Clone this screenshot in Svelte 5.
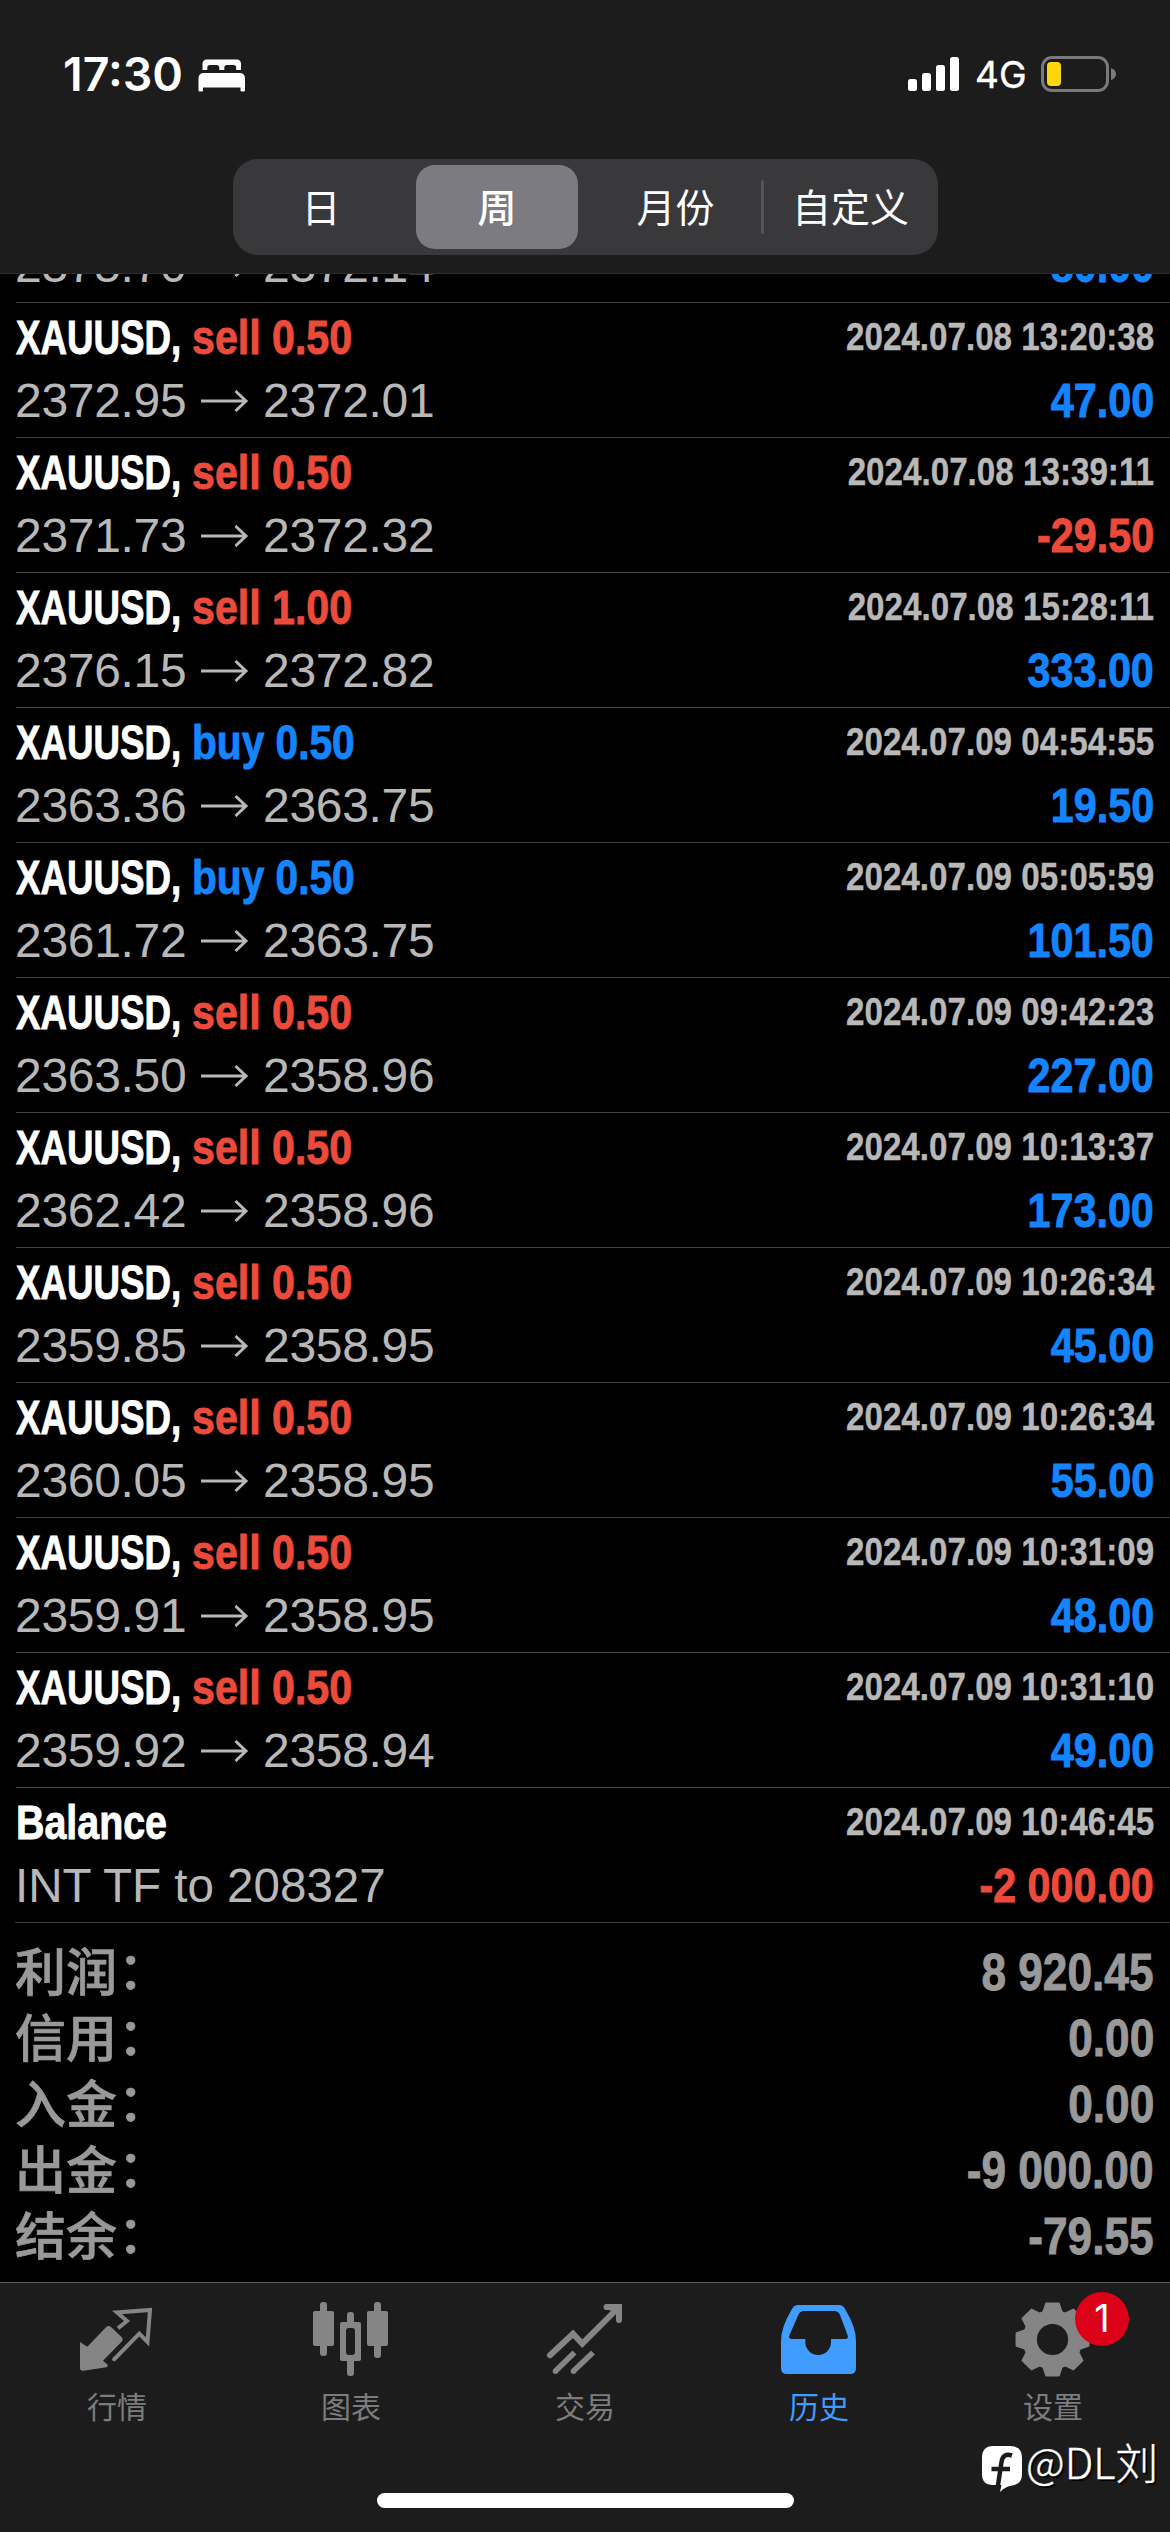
<script>
  const deals = [
    { side: 'sell', volume: '0.50', time: '2024.07.08 13:20:38', open: '2372.95', close: '2372.01', result: '47.00' },
    { side: 'sell', volume: '0.50', time: '2024.07.08 13:39:11', open: '2371.73', close: '2372.32', result: '-29.50' },
    { side: 'sell', volume: '1.00', time: '2024.07.08 15:28:11', open: '2376.15', close: '2372.82', result: '333.00' },
    { side: 'buy', volume: '0.50', time: '2024.07.09 04:54:55', open: '2363.36', close: '2363.75', result: '19.50' },
    { side: 'buy', volume: '0.50', time: '2024.07.09 05:05:59', open: '2361.72', close: '2363.75', result: '101.50' },
    { side: 'sell', volume: '0.50', time: '2024.07.09 09:42:23', open: '2363.50', close: '2358.96', result: '227.00' },
    { side: 'sell', volume: '0.50', time: '2024.07.09 10:13:37', open: '2362.42', close: '2358.96', result: '173.00' },
    { side: 'sell', volume: '0.50', time: '2024.07.09 10:26:34', open: '2359.85', close: '2358.95', result: '45.00' },
    { side: 'sell', volume: '0.50', time: '2024.07.09 10:26:34', open: '2360.05', close: '2358.95', result: '55.00' },
    { side: 'sell', volume: '0.50', time: '2024.07.09 10:31:09', open: '2359.91', close: '2358.95', result: '48.00' },
    { side: 'sell', volume: '0.50', time: '2024.07.09 10:31:10', open: '2359.92', close: '2358.94', result: '49.00' }
  ];

  const totals = [
    ['利润', '8 920.45'],
    ['信用', '0.00'],
    ['入金', '0.00'],
    ['出金', '-9 000.00'],
    ['结余', '-79.55']
  ];

  const periods = ['日', '周', '月份', '自定义'];
  const activePeriod = 1;

  const tabs = [
    { id: 'quotes', label: '行情' },
    { id: 'charts', label: '图表' },
    { id: 'trade', label: '交易' },
    { id: 'history', label: '历史' },
    { id: 'settings', label: '设置', badge: 1 }
  ];

  // Outline of an eight-tooth gear around (cx, cy)
  function gear(cx, cy, tip, root) {
    const at = (deg, r) => {
      const a = (deg * Math.PI) / 180;
      return (cx + r * Math.sin(a)).toFixed(2) + ' ' + (cy - r * Math.cos(a)).toFixed(2);
    };
    let d = '';
    for (let i = 0; i < 8; i++) {
      const c = i * 45;
      d += (i ? 'L' : 'M') + at(c - 18, root) + 'L' + at(c - 10, tip) + 'L' + at(c + 10, tip) + 'L' + at(c + 18, root);
      d += 'Q' + at(c + 22.5, root - 1) + ' ' + at(c + 27, root);
    }
    return d + 'Z';
  }
  const gearPath = gear(38.5, 40.5, 36.5, 29.2);
</script>

{#snippet prices(open, close)}
  <span class="prices">
    <span class="open">{open}</span>
    <svg class="arrow" width="48" height="26" viewBox="0 0 48 26"><path d="M0 13H45M34.500 3L45 13L34.500 23" /></svg>
    <span>{close}</span>
  </span>
{/snippet}

<div class="screen">
  <header>
    <div class="status">
      <span class="clock">17:30</span>
      <svg class="bed" width="48" height="33" viewBox="0 0 48 33">
        <path d="M4.500 11V5Q4.500 0.500 9 0.500H38.500Q43 0.500 43 5V11H38.200V8.500Q38.200 6 35.700 6H29Q26.300 6 26.300 8.500V11H21.300V8.500Q21.300 6 18.600 6H12Q9.300 6 9.300 8.500V11Z" />
        <path d="M0.500 32V19.500Q0.500 14 6 14H41.500Q47 14 47 19.500V32Q44.700 33.200 42.500 32V28.500H5V32Q2.800 33.200 0.500 32Z" />
      </svg>
      <span class="spacer"></span>
      <svg class="signal" width="52" height="36" viewBox="0 0 52 36">
        <rect x="0" y="23" width="9" height="12" rx="2.500" /><rect x="14" y="17" width="9" height="18" rx="2.500" />
        <rect x="28" y="9" width="9" height="26" rx="2.500" /><rect x="42" y="1" width="9" height="34" rx="2.500" />
      </svg>
      <span class="network">4G</span>
      <svg class="battery" width="76" height="36" viewBox="0 0 76 36">
        <rect x="1.500" y="1.500" width="65" height="33" rx="9.500" fill="none" stroke="#7a7a7c" stroke-width="3" />
        <rect x="6" y="6" width="14" height="24" rx="4" fill="#ffd60a" />
        <path d="M70 12Q75 14 75 18Q75 22 70 24Z" fill="#7a7a7c" />
      </svg>
    </div>
    <div class="segments">
      {#each periods as period, i}
        <div class="segment" class:active={i === activePeriod} class:divided={i === 3}><span>{period}</span></div>
      {/each}
    </div>
  </header>

  <main>
    <div class="cut">
      <div class="row">
        <div class="line second">{@render prices('2375.70', '2372.14')}<span class="result">80.00</span></div>
      </div>
    </div>
    {#each deals as deal}
      <div class="row">
        <div class="line first">
          <span class="symbol">XAUUSD,</span>
          <span class="side {deal.side}">{deal.side} {deal.volume}</span>
          <span class="time">{deal.time}</span>
        </div>
        <div class="line second">
          {@render prices(deal.open, deal.close)}
          <span class="result" class:loss={deal.result.startsWith('-')}>{deal.result}</span>
        </div>
      </div>
    {/each}
    <div class="row">
      <div class="line first"><span class="balance">Balance</span><span class="time">2024.07.09 10:46:45</span></div>
      <div class="line second"><span class="note">INT TF to 208327</span><span class="result loss">-2 000.00</span></div>
    </div>
    <div class="totals">
      {#each totals as [label, value]}
        <div class="total"><span class="label">{label}</span><span class="colon">：</span><span class="amount">{value}</span></div>
      {/each}
    </div>
  </main>

  <nav>
    <div class="tabs">
      {#each tabs as tab}
        <div class="tab" class:current={tab.id === 'history'}>
          <svg class="icon" width="78" height="78" viewBox="0 0 78 78">
            {#if tab.id === 'quotes'}
              <path class="fill" d="M2 43L9.300 47.700L28 28.300Q30.500 26 33 28L44 38.500Q45.500 40.500 44 42.300L25 61.700L29.700 65.700Q30.500 67.500 28.500 68.200L5.300 71.700Q2 72 2 69Z" />
              <path class="line" stroke-width="4" d="M40 29.300L49 22L39 13.500L72 11L69.500 43L61.300 34.500L36.300 60.200L34.500 59.500" />
            {:else if tab.id === 'charts'}
              <g class="fill">
                <rect x="1" y="12" width="21" height="35" rx="2" /><rect x="8" y="3" width="7" height="54" rx="3" />
                <rect x="55" y="12" width="21" height="35" rx="2" /><rect x="62" y="3" width="7" height="56" rx="3" />
                <rect x="35" y="13" width="7" height="14" rx="3" /><rect x="35" y="58" width="7" height="19" rx="3" />
                <path fill-rule="evenodd" d="M30 23H47Q49 23 49 25V60Q49 62 47 62H30Q28 62 28 60V25Q28 23 30 23ZM37 29Q34 29 34 32V53Q34 56 37 56H40Q43 56 43 53V32Q43 29 40 29Z" />
              </g>
            {:else if tab.id === 'trade'}
              <path class="line" stroke-width="6" stroke-linecap="round" d="M4 56.300L27 34.700L36.300 44.700L71 10M60.500 8H73V21" />
              <path class="fill" d="M60 5H76V22L71 15L63 11Z" />
              <path class="line" stroke-width="5.500" d="M9.300 72.300L28.500 53.500M27.300 72.300L47 53.500" />
              <circle class="fill" cx="9.500" cy="72.200" r="2.800" /><circle class="fill" cx="27.500" cy="72.200" r="2.800" />
            {:else if tab.id === 'history'}
              <path class="fill" fill-rule="evenodd" d="M18 6H59Q63 6 65 10Q76 28 76 42V69Q76 75 70 75H7Q1 75 1 69V42Q1 28 12 10Q14 6 18 6ZM24 12Q20 12 18.500 15.500L9.500 36Q8 40 12 40H25.300V43A12.850 13 0 0 0 51 43V40H65Q69 40 67.500 36L60 16Q58.500 12 54 12Z" />
            {:else}
              <path class="fill" stroke="#858585" stroke-width="2" stroke-linejoin="round" d={gearPath} />
              <circle cx="38.500" cy="40.500" r="15.600" fill="#1c1c1c" />
            {/if}
          </svg>
          <span class="caption">{tab.label}</span>
          {#if tab.badge}<span class="badge">{tab.badge}</span>{/if}
        </div>
      {/each}
    </div>
    <div class="home"></div>
    <div class="credit">
      <svg width="42" height="48" viewBox="0 0 42 48">
        <path d="M12 0H29Q41 0 41 12V28Q41 39 29 40Q24 41 19 46L20.500 39H12Q1 39 1 28V12Q1 0 12 0Z" fill="#fff" />
        <path d="M31 9.500Q22 6.500 20.500 16L16 46M10.500 23H29" fill="none" stroke="#1c1c1c" stroke-width="4.500" />
      </svg>
      <span>@DL刘</span>
    </div>
  </nav>
</div>

<style>
  :global(body) { margin: 0; background: #000; }
  .screen {
    width: 1170px; height: 2532px; overflow: hidden; background: #000;
    display: flex; flex-direction: column;
    font-family: 'Liberation Sans', 'Noto Sans CJK SC', sans-serif; color: #fff;
  }
  header { box-sizing: border-box; height: 274px; flex: none; background: #1c1c1c; border-bottom: 1px solid #2c2c2c; }
  .status { display: flex; height: 159px; padding: 0 53px 0 63px; align-items: flex-start; box-sizing: border-box; }
  .clock { width: 135px; padding-top: 45px; font: 600 46.500px/58px Inter, sans-serif; }
  .bed { margin-top: 59px; fill: #fff; }
  .spacer { flex: 1; }
  .signal { margin-top: 56px; fill: #fff; }
  .network { width: 66px; margin-left: 15px; padding-top: 50px; font: 400 37px/50px Inter, sans-serif; -webkit-text-stroke: 0.4px #fff; }
  .battery { margin-top: 56px; }
  .segments { display: flex; width: 705px; height: 96px; margin-left: 233px; border-radius: 25px; background: #39393c; }
  .segment {
    box-sizing: border-box; flex: none; width: 162px; margin: 6px 7px; padding-bottom: 5px; border-radius: 19px;
    display: flex; align-items: center; justify-content: center;
    font: 400 39px/60px 'Noto Sans CJK SC', sans-serif;
  }
  .segment.active { background: #7d7b82; font-weight: 500; }
  .segment:nth-child(3) { padding-left: 5px; }
  .segment.divided { width: 170px; margin: 6px 0; }
  .segment.divided::before { content: ''; width: 3px; height: 54px; margin-top: 5px; border-radius: 2px; background: #545457; }
  .segment.divided span { flex: 1; text-align: center; white-space: nowrap; padding-left: 6px; }

  main { flex: none; height: 2008px; }
  .cut { height: 28px; overflow: hidden; display: flex; flex-direction: column; justify-content: flex-end; }
  .row { box-sizing: border-box; height: 135px; flex: none; margin-left: 16px; padding: 5px 16px 5px 0; border-top: 1px solid #434345; }
  .cut .row { padding-top: 65px; }
  .line { display: flex; font-size: 48px; }
  .first { height: 60px; line-height: 60px; font-weight: 700; }
  .second { height: 64px; line-height: 66px; color: #b8b8b8; }
  .symbol, .side, .time, .result, .balance, .amount { -webkit-text-stroke: 0.9px currentColor; white-space: nowrap; }
  .symbol, .side, .balance, .note, .prices { transform-origin: left; }
  .symbol { width: 176px; transform: scaleX(0.765); }
  .side { transform: scaleX(0.857); }
  .sell { color: #ec4b3b; }
  .buy { color: #1485ff; transform: scaleX(0.847); }
  .time, .result, .amount { margin-left: auto; transform-origin: right; }
  .time { font-size: 39px; line-height: 58px; color: #b8b8b8; transform: scaleX(0.851); -webkit-text-stroke-width: 0.4px; }
  .result { font-weight: 700; color: #1485ff; transform: scaleX(0.86); }
  .loss { color: #ec4b3b; }
  .balance { transform: scaleX(0.82); }
  .note { margin-left: -1px; transform: scaleX(0.99); }
  .prices { display: flex; align-items: center; padding-top: 2px; margin-left: -1px; letter-spacing: -0.3px; }
  .open { width: 186px; }
  .arrow { margin-right: 14px; fill: none; stroke: #b8b8b8; stroke-width: 3; }

  .totals { box-sizing: border-box; border-top: 1px solid #434345; margin-left: 15px; padding: 16px 16px 0 0; color: #999; }
  .total { display: flex; height: 66px; font-size: 51px; line-height: 60px; }
  .label, .colon { font-family: 'Noto Sans CJK SC', sans-serif; font-weight: 500; -webkit-text-stroke: 0.7px currentColor; }
  .colon { width: 30px; margin-left: 1px; line-height: 56px; }
  .amount { font-weight: 700; transform: scaleX(0.867); line-height: 68px; }

  nav { position: relative; flex: 1; box-sizing: border-box; border-top: 1px solid #585858; background: #1c1c1c; }
  .tabs { display: flex; padding-top: 16px; }
  .tab { position: relative; flex: 1; display: flex; flex-direction: column; align-items: center; color: #7c7c7c; }
  .icon { overflow: visible; }
  .fill { fill: #858585; }
  .tab .line { fill: none; stroke: #858585; }
  .current { color: #409cff; }
  .current .fill { fill: #409cff; }
  .caption { margin-top: 7px; font: 400 30px/42px 'Noto Sans CJK SC', sans-serif; }
  .badge {
    position: absolute; left: 139px; top: -7px; width: 54px; height: 54px; border-radius: 50%;
    background: #dc0019; color: #fff; text-align: center; font: 400 38px/53px Inter, sans-serif;
  }
  .home { width: 417px; height: 15px; margin: 67px auto 0; border-radius: 8px; background: #fff; }
  .credit {
    position: absolute; left: 981px; top: 163px; display: flex; gap: 3px; white-space: nowrap;
    font: 300 42.500px/30px 'Noto Sans CJK SC', sans-serif; text-shadow: 2px 2px 1px #000;
    -webkit-text-stroke: 0.4px #fff;
  }
</style>
